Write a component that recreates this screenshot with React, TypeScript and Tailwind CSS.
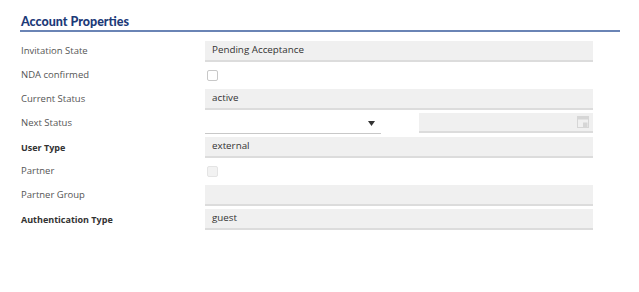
import React from "react";

const font = { fontFamily: '"Open Sans", "Noto Sans", sans-serif' };

function Label({ children, bold }: { children: React.ReactNode; bold?: boolean }) {
  return (
    <div
      className={
        "w-[184px] shrink-0 " +
        (bold ? "text-[9px] font-bold text-[#333]" : "text-[9.5px] text-[#555]")
      }
    >
      {children}
    </div>
  );
}

function TextBox({ value }: { value?: string }) {
  return (
    <div className="w-[388px] h-[21px] bg-[#f0f0f0] border-b-2 border-[#dcdcdc] flex items-center pl-[7px] text-[9.8px] text-[#333]">
      {value}
    </div>
  );
}

function Row({ children }: { children: React.ReactNode }) {
  return <div className="h-[21px] flex items-center">{children}</div>;
}

export default function App() {
  return (
    <div className="w-[639px] h-[292px] bg-white" style={font}>
      <div className="pl-[20px] pt-[13px]">
        <div className="w-[600px] border-b-2 border-[#6a84b5]">
          <div
            className="pl-[1px] text-[12.5px] font-black text-[#1c3a78] leading-[16px] pt-[1px]"
            style={{ fontFamily: 'Lato, "Open Sans", sans-serif' }}
          >
            Account Properties
          </div>
        </div>
        <div className="pl-[1px] mt-[9px] flex flex-col gap-[3px]">
          <Row>
            <Label>Invitation State</Label>
            <TextBox value="Pending Acceptance" />
          </Row>
          <Row>
            <Label>NDA confirmed</Label>
            <div className="ml-[2px] w-[11px] h-[11px] rounded-[2px] border border-[#c8c8c8] bg-white" />
          </Row>
          <Row>
            <Label>Current Status</Label>
            <TextBox value="active" />
          </Row>
          <Row>
            <Label>Next Status</Label>
            <div className="w-[176px] h-[21px] border-b border-[#c8c8c8] flex items-center justify-end pr-[6px]">
              <svg width="7" height="5" viewBox="0 0 7 5">
                <path d="M0 0 H7 L3.5 5 Z" fill="#333" />
              </svg>
            </div>
            <div className="ml-[38px] w-[174px] h-[20px] mb-[1px] bg-[#f0f0f0] border-b-2 border-[#dcdcdc] flex items-center justify-end pr-[4px]">
              <svg width="12" height="12" viewBox="0 0 12 12">
                <rect x="0.5" y="0.5" width="11" height="11" fill="none" stroke="#d6d6d6" />
                <rect x="1" y="1" width="10" height="2.5" fill="#d6d6d6" />
                <rect x="6" y="6.5" width="4.5" height="4.5" fill="#d6d6d6" />
              </svg>
            </div>
          </Row>
          <Row>
            <Label bold>User Type</Label>
            <TextBox value="external" />
          </Row>
          <Row>
            <Label>Partner</Label>
            <div className="ml-[2px] w-[11px] h-[11px] rounded-[2px] border border-[#e4e4e4] bg-[#f2f2f2]" />
          </Row>
          <Row>
            <Label>Partner Group</Label>
            <TextBox />
          </Row>
          <Row>
            <Label bold>Authentication Type</Label>
            <TextBox value="guest" />
          </Row>
        </div>
      </div>
    </div>
  );
}
